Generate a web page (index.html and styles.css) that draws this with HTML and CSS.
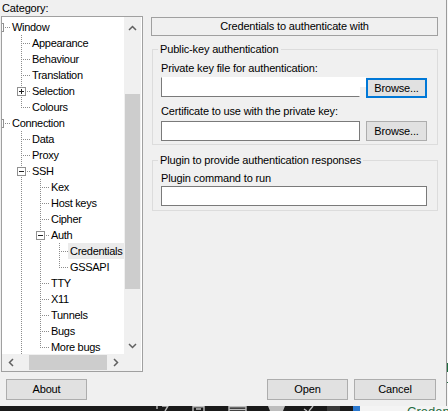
FILE: index.html
```html
<!DOCTYPE html>
<html>
<head>
<meta charset="utf-8">
<link rel="stylesheet" href="styles.css">
</head>
<body>
<div class="screen">
  <div class="upper">
    <div class="dialog">
      <div class="main">
        <div class="left">
          <div class="cat-label">Category:</div>
          <div class="tree">
            <div class="tree-top">
              <div class="tree-view">
                <div class="row"><span class="g groot"><i class="brk"></i></span><span class="lbl">Window</span></div>
                <div class="row"><span class="g g0"></span><span class="g ge mid"></span><span class="lbl">Appearance</span></div>
                <div class="row"><span class="g g0"></span><span class="g ge mid"></span><span class="lbl">Behaviour</span></div>
                <div class="row"><span class="g g0"></span><span class="g ge mid"></span><span class="lbl">Translation</span></div>
                <div class="row"><span class="g g0"></span><span class="g ge mid"><i class="box plus"></i></span><span class="lbl">Selection</span></div>
                <div class="row"><span class="g g0"></span><span class="g ge"></span><span class="lbl">Colours</span></div>
                <div class="row"><span class="g groot"><i class="brk"></i></span><span class="lbl">Connection</span></div>
                <div class="row"><span class="g g0"></span><span class="g ge mid"></span><span class="lbl">Data</span></div>
                <div class="row"><span class="g g0"></span><span class="g ge mid"></span><span class="lbl">Proxy</span></div>
                <div class="row"><span class="g g0"></span><span class="g ge mid"><i class="box"></i></span><span class="lbl">SSH</span></div>
                <div class="row"><span class="g g0"></span><span class="g ga on"></span><span class="g ge mid"></span><span class="lbl">Kex</span></div>
                <div class="row"><span class="g g0"></span><span class="g ga on"></span><span class="g ge mid"></span><span class="lbl">Host keys</span></div>
                <div class="row"><span class="g g0"></span><span class="g ga on"></span><span class="g ge mid"></span><span class="lbl">Cipher</span></div>
                <div class="row"><span class="g g0"></span><span class="g ga on"></span><span class="g ge mid"><i class="box"></i></span><span class="lbl">Auth</span></div>
                <div class="row"><span class="g g0"></span><span class="g ga on"></span><span class="g ga on"></span><span class="g ge mid"></span><span class="lbl sel">Credentials</span></div>
                <div class="row"><span class="g g0"></span><span class="g ga on"></span><span class="g ga on"></span><span class="g ge"></span><span class="lbl">GSSAPI</span></div>
                <div class="row"><span class="g g0"></span><span class="g ga on"></span><span class="g ge mid"></span><span class="lbl">TTY</span></div>
                <div class="row"><span class="g g0"></span><span class="g ga on"></span><span class="g ge mid"></span><span class="lbl">X11</span></div>
                <div class="row"><span class="g g0"></span><span class="g ga on"></span><span class="g ge mid"></span><span class="lbl">Tunnels</span></div>
                <div class="row"><span class="g g0"></span><span class="g ga on"></span><span class="g ge mid"></span><span class="lbl">Bugs</span></div>
                <div class="row"><span class="g g0"></span><span class="g ga on"></span><span class="g ge"></span><span class="lbl">More bugs</span></div>
              </div>
              <div class="vscroll">
                <div class="sb-btn up"><svg width="9" height="6" viewBox="0 0 9 6"><polyline points="1,5 4.5,1.5 8,5" fill="none" stroke="#606060" stroke-width="1.5"/></svg></div>
                <div class="vtrack"><div class="vthumb"></div></div>
                <div class="sb-btn"><svg width="9" height="6" viewBox="0 0 9 6"><polyline points="1,1 4.5,4.5 8,1" fill="none" stroke="#606060" stroke-width="1.5"/></svg></div>
              </div>
            </div>
            <div class="tree-bottom">
              <div class="hscroll">
                <div class="sb-btn"><svg width="6" height="9" viewBox="0 0 6 9"><polyline points="5,1 1.5,4.5 5,8" fill="none" stroke="#606060" stroke-width="1.5"/></svg></div>
                <div class="htrack"><div class="hthumb"></div></div>
                <div class="sb-btn"><svg width="6" height="9" viewBox="0 0 6 9"><polyline points="1,1 4.5,4.5 1,8" fill="none" stroke="#606060" stroke-width="1.5"/></svg></div>
              </div>
              <div class="corner"></div>
            </div>
          </div>
        </div>
        <div class="right">
          <div class="title-box">Credentials to authenticate with</div>
          <fieldset class="group">
            <legend>Public-key authentication</legend>
            <div class="flabel l1">Private key file for authentication:</div>
            <div class="frow r1"><div class="input redact"></div><button class="btn browse focused">Browse...</button></div>
            <div class="flabel l2">Certificate to use with the private key:</div>
            <div class="frow r2"><div class="input"></div><button class="btn browse">Browse...</button></div>
          </fieldset>
          <fieldset class="group g2">
            <legend>Plugin to provide authentication responses</legend>
            <div class="flabel l3">Plugin command to run</div>
            <div class="input wide"></div>
          </fieldset>
        </div>
      </div>
      <div class="buttons">
        <button class="btn bbtn">About</button>
        <div class="spacer"></div>
        <button class="btn bbtn">Open</button>
        <button class="btn bbtn cancel">Cancel</button>
      </div>
    </div>
    <div class="side"><div class="m1"></div><div class="m2"></div></div>
  </div>
  <div class="taskbar">
    <div class="tb-dark">
      <svg width="353" height="5" viewBox="0 0 353 5">
        <g fill="none" stroke="#bdbdbd" stroke-width="1.4">
          <path d="M157 0 L157 3 M162 0 L168 0 L165 5"/>
          <path d="M193 0.7 L204 0.7 M193 0 L193 5 M204 0 L204 5 M196 3 L201 3"/>
          <path d="M229 0.7 L246 0.7 M229 0 L229 5 M246 0 L246 5 M229 3.5 L246 3.5"/>
          <path d="M304 3 L307 5 M313 0 L309 5"/>
        </g>
        <path d="M268 0 L285 0 L283 5 L270 5 Z" fill="#bdbdbd"/>
        <rect x="327" y="0" width="13" height="5" fill="#3a3a3a"/>
      </svg>
    </div>
    <div class="tb-blue"></div>
    <div class="tb-light"><span class="tb-text">Creden</span></div>
  </div>
</div>
</body>
</html>
```

FILE: styles.css
```css
* { box-sizing: border-box; }
html, body { margin: 0; padding: 0; }
body {
  background: #f0f0f0;
  font-family: "Liberation Sans", Arial, sans-serif;
  font-size: 11px;
  color: #000;
  letter-spacing: -0.15px;
}
.screen { width: 448px; height: 411px; overflow: hidden; display: flex; flex-direction: column; }
.upper { display: flex; height: 406px; flex: none; }
.dialog { width: 447px; height: 406px; border-right: 1px solid #9a9a9a; background: #f0f0f0; flex: none; }
.side { width: 1px; background: #f6f6f6; display: flex; flex-direction: column; }
.side .m1 { margin-top: 363px; height: 9px; background: #1f6b3f; }
.side .m2 { margin-top: 10px; height: 1px; background: #1f6b3f; }

/* main area */
.main { display: flex; height: 372px; }
.left { margin-left: 1px; width: 142px; display: flex; flex-direction: column; flex: none; }
.cat-label { height: 16px; padding: 1px 0 0 1px; line-height: 15px; }
.tree { height: 356px; border: 1px solid #a0a0a0; display: flex; flex-direction: column; background: #fff; }
.tree-top { display: flex; height: 337px; }
.tree-view { width: 122px; overflow: hidden; padding-top: 2px; background: #fff; flex: none; }
.vscroll { width: 17px; background: #f0f0f0; display: flex; flex-direction: column; flex: none; }
.sb-btn { width: 17px; height: 17px; display: flex; align-items: center; justify-content: center; flex: none; }
.sb-btn svg { display: block; }
.sb-btn.up { padding-top: 4px; }
.vtrack { flex: 1; }
.vthumb { margin: 60px 0 0 1px; width: 15px; height: 195px; background: #cdcdcd; }
.tree-bottom { display: flex; height: 17px; }
.hscroll { width: 122px; display: flex; background: #f0f0f0; flex: none; }
.htrack { flex: 1; }
.hthumb { margin: 1px 0 0 10px; width: 78px; height: 15px; background: #cdcdcd; }
.corner { width: 17px; background: #f0f0f0; }

/* tree rows */
.row { display: flex; height: 16px; line-height: 16px; white-space: nowrap; letter-spacing: -0.3px; }
.g { position: relative; flex: none; height: 16px; }
.g0 { width: 11px; }
.groot { width: 8px; }
.ga { width: 19px; }
.ge { width: 17px; }
.lbl { padding: 0 2px; flex: none; }
.lbl.sel { background: #ebebeb; }
.ga.on::before, .ge::before {
  content: ""; position: absolute; left: 8px; top: 0; width: 1px; height: 16px;
  background: linear-gradient(#8c8c8c 50%, transparent 50%) 0 0 / 1px 2px repeat-y;
}
.ge::before { height: 9px; }
.ge.mid::before { height: 16px; }
.ge::after, .groot::after {
  content: ""; position: absolute; left: 8px; top: 8px; width: 9px; height: 1px;
  background: linear-gradient(to right, #8c8c8c 50%, transparent 50%) 0 0 / 2px 1px repeat-x;
}
.groot::after { left: 3px; width: 5px; }
.brk { position: absolute; left: 0; top: 4px; width: 2px; height: 9px; border: 1px solid #919191; border-left: none; }
.box { position: absolute; left: 4px; top: 4px; width: 9px; height: 9px; border: 1px solid #919191; background: #fff; z-index: 1; }
.box::before { content: ""; position: absolute; left: 1px; top: 3px; width: 5px; height: 1px; background: #222; }
.box.plus::after { content: ""; position: absolute; left: 3px; top: 1px; width: 1px; height: 5px; background: #222; }

/* right panel */
.right { margin-left: 8px; width: 287px; padding-top: 17px; flex: none; }
.title-box { height: 19px; border: 1px solid #a0a0a0; text-align: center; line-height: 17px; }
.group { margin: 7px 0 0 1px; padding: 0 10px 3px 8px; border: 1px solid #dcdcdc; min-width: 0; }
.group legend { padding: 0 2px; margin-left: -3px; line-height: 13px; }
.g2 { margin-top: 9px; padding-bottom: 4px; }
.flabel { line-height: 13px; }
.l1 { margin-top: 6px; }
.r1 { margin-top: 2px; }
.l2 { margin-top: 7px; }
.r2 { margin-top: 3px; }
.l3 { margin-top: 5px; }
.wide { margin-top: 1px; }
.frow { display: flex; align-items: flex-start; }
.input { height: 20px; border: 1px solid #7a7a7a; background: #fff; }
.frow .input { width: 199px; flex: none; }
.input.redact { position: relative; border-top-color: #fff; border-right-color: #fff; }
.input.redact::after { content: ""; position: absolute; left: 198px; top: -1px; width: 6px; height: 10px; background: #fff; }
.btn {
  font: inherit; letter-spacing: inherit; color: #000; background: #e1e1e1;
  border: 1px solid #adadad; padding: 0; margin: 0; height: 20px; line-height: 18px;
  text-align: center; flex: none;
}
.browse { width: 61px; margin-left: 6px; }
.browse.focused { border: 2px solid #0078d7; margin-top: 1px; line-height: 16px; }

/* bottom buttons */
.buttons { display: flex; margin-top: 7px; padding: 0 10px 0 6px; }
.bbtn { height: 21px; width: 81px; line-height: 19px; }
.spacer { flex: 1; }
.cancel { margin-left: 6px; width: 82px; }

/* taskbar remnant */
.taskbar { height: 5px; display: flex; overflow: hidden; flex: none; }
.tb-dark { width: 353px; background: #1a1a1a; flex: none; }
.tb-dark svg { display: block; }
.tb-blue { width: 7px; background: #2b79d0; flex: none; }
.tb-light { flex: 1; background: #f4f4f4; padding-left: 47px; overflow: hidden; }
.tb-text { display: block; font-size: 13px; line-height: 13px; margin-top: -1px; color: #1f6b3f; letter-spacing: 0; }
```
